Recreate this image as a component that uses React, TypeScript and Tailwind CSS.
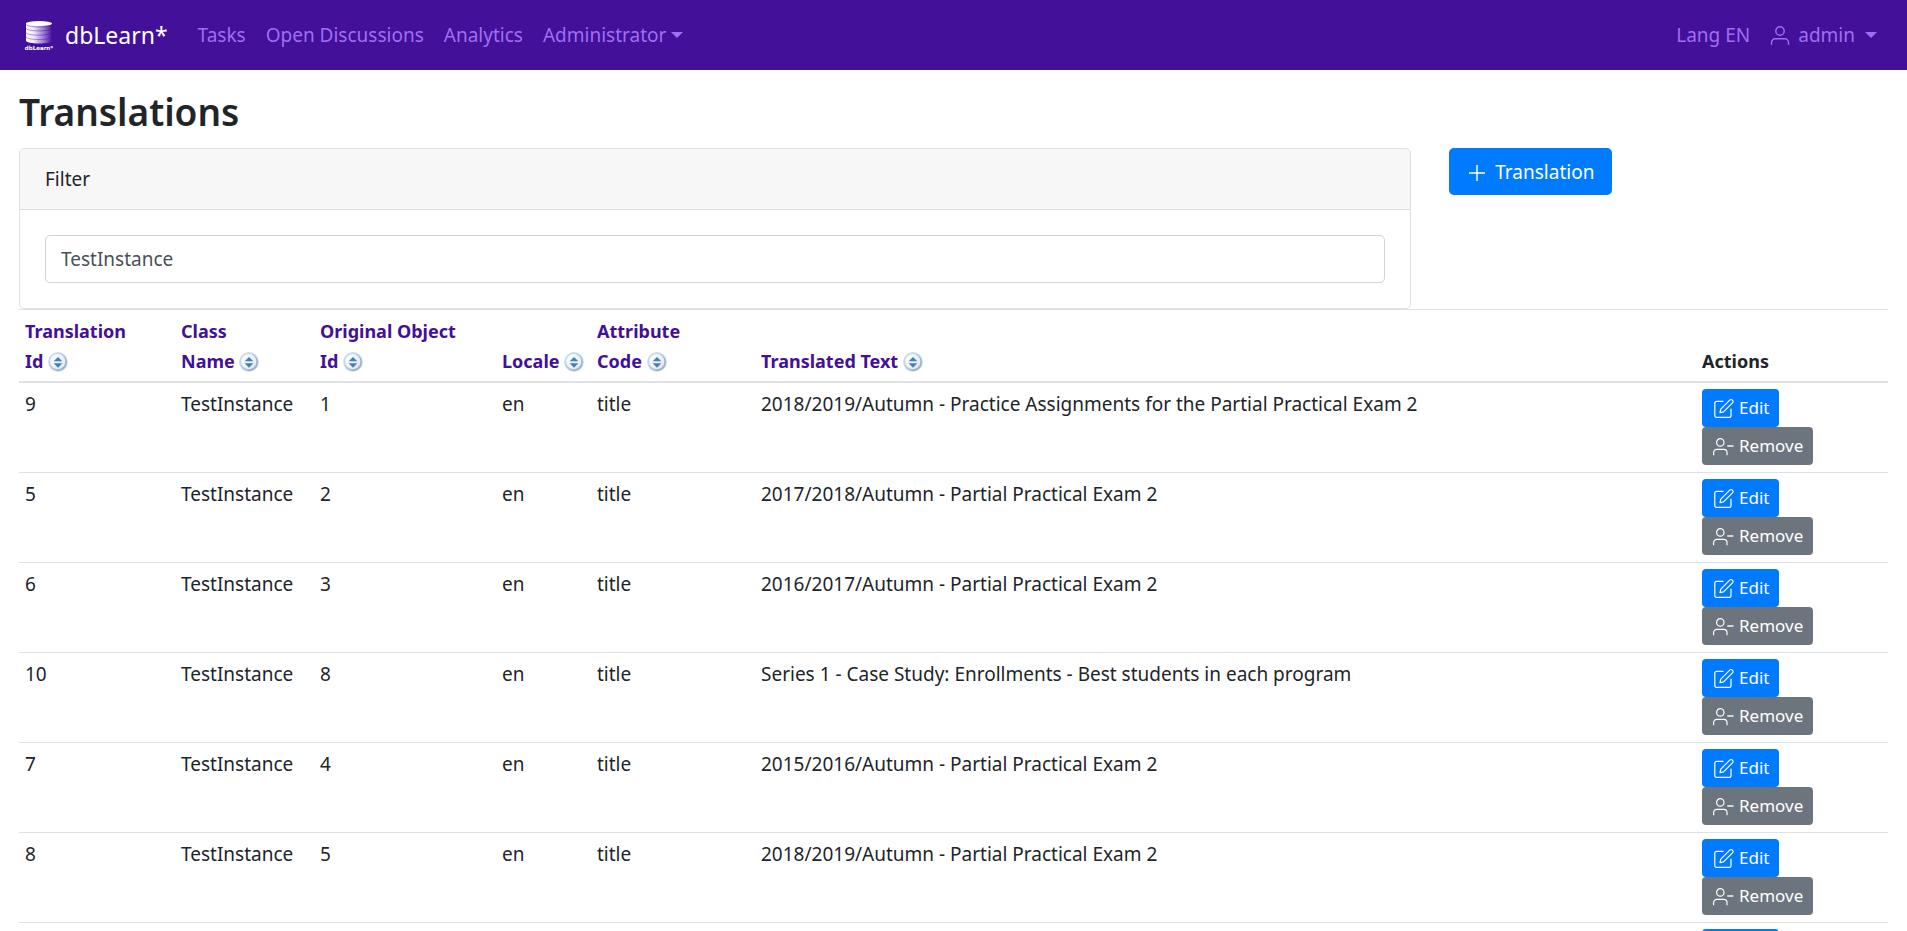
import React, { useState } from "react";

type Row = { id: number; className: string; objectId: number; locale: string; code: string; text: string };

const rows: Row[] = [
  { id: 9, className: "TestInstance", objectId: 1, locale: "en", code: "title", text: "2018/2019/Autumn - Practice Assignments for the Partial Practical Exam 2" },
  { id: 5, className: "TestInstance", objectId: 2, locale: "en", code: "title", text: "2017/2018/Autumn - Partial Practical Exam 2" },
  { id: 6, className: "TestInstance", objectId: 3, locale: "en", code: "title", text: "2016/2017/Autumn - Partial Practical Exam 2" },
  { id: 10, className: "TestInstance", objectId: 8, locale: "en", code: "title", text: "Series 1 - Case Study: Enrollments - Best students in each program" },
  { id: 7, className: "TestInstance", objectId: 4, locale: "en", code: "title", text: "2015/2016/Autumn - Partial Practical Exam 2" },
  { id: 8, className: "TestInstance", objectId: 5, locale: "en", code: "title", text: "2018/2019/Autumn - Partial Practical Exam 2" },
  { id: 11, className: "TestInstance", objectId: 6, locale: "en", code: "title", text: "2014/2015/Autumn - Partial Practical Exam 2" },
];

const columns: { lines: string[]; width: string }[] = [
  { lines: ["Translation", "Id"], width: "w-[156px]" },
  { lines: ["Class", "Name"], width: "w-[139px]" },
  { lines: ["Original Object", "Id"], width: "w-[182px]" },
  { lines: ["Locale"], width: "w-[95px]" },
  { lines: ["Attribute", "Code"], width: "w-[164px]" },
  { lines: ["Translated Text"], width: "" },
];

function Logo() {
  return (
    <svg viewBox="0 0 38 38" className="size-[38px]" aria-hidden="true">
      <defs>
        <linearGradient id="cyl" x1="0" x2="1" y1="0" y2="0">
          <stop offset="0" stopColor="#fff" />
          <stop offset="0.3" stopColor="#efe8fb" />
          <stop offset="0.75" stopColor="#8a64cc" />
          <stop offset="1" stopColor="#421099" />
        </linearGradient>
      </defs>
      <path d="M6 7v17.500c0 1.800 5.800 3 13 3s13-1.200 13-3V7z" fill="url(#cyl)" />
      <g fill="none" stroke="#421099" strokeWidth="0.7" strokeOpacity="0.6">
        <path d="M6 8c0 1.800 5.800 2.900 13 2.900s13-1.100 13-2.900" />
        <path d="M6 12c0 1.800 5.800 2.900 13 2.900s13-1.100 13-2.900" />
        <path d="M6 16.300c0 1.800 5.800 2.900 13 2.900s13-1.100 13-2.900" />
        <path d="M6 20.600c0 1.800 5.800 2.900 13 2.900s13-1.100 13-2.900" />
      </g>
      <ellipse cx="19" cy="7.500" rx="13" ry="2.600" fill="#fff" />
      <text x="19" y="34" textAnchor="middle" fill="#fff" fontSize="5.500" fontWeight="700" fontFamily="DejaVu Sans, sans-serif">dbLearn*</text>
    </svg>
  );
}

function UserIcon() {
  return (
    <svg viewBox="0 0 20 20" className="size-5" fill="none" stroke="currentColor" strokeWidth="1.400" aria-hidden="true">
      <circle cx="10" cy="6" r="4.200" />
      <path d="M1.500 20v-2.500a3.700 3.700 0 0 1 3.700-3.700h9.600a3.700 3.700 0 0 1 3.700 3.700V20" />
    </svg>
  );
}

function PlusIcon() {
  return (
    <svg viewBox="0 0 20 20" className="size-5" fill="none" stroke="currentColor" strokeWidth="1.400" aria-hidden="true">
      <path d="M10 3v16M2 11h16" />
    </svg>
  );
}

function EditIcon() {
  return (
    <svg viewBox="0 0 22 20" className="h-5 w-[22px]" fill="none" stroke="currentColor" strokeWidth="1.200" strokeLinejoin="round" strokeLinecap="round" aria-hidden="true">
      <path d="M11 3.400H4.400a1.600 1.600 0 0 0-1.600 1.600v12.800a1.600 1.600 0 0 0 1.600 1.600h13a1.600 1.600 0 0 0 1.600-1.600V11" />
      <path d="M8 14.600l.8-3.500L18 1.900a1.400 1.400 0 0 1 2 0l.7.700a1.400 1.400 0 0 1 0 2L11.500 13.800z" />
    </svg>
  );
}

function RemoveIcon() {
  return (
    <svg viewBox="0 0 22 20" className="h-5 w-[22px]" fill="none" stroke="currentColor" strokeWidth="1.200" aria-hidden="true">
      <circle cx="8.300" cy="6.400" r="3.700" />
      <path d="M1.600 19.300v-2.700a3.200 3.200 0 0 1 3.200-3.200h7a3.200 3.200 0 0 1 3.200 3.200v2.700" />
      <path d="M15.300 10h6.200" strokeWidth="1.400" />
    </svg>
  );
}

function SortIcon() {
  return (
    <svg viewBox="0 0 20 20" className="inline-block size-5 align-[-4px]" aria-hidden="true">
      <defs>
        <linearGradient id="ring" x1="0" x2="1" y1="0" y2="1">
          <stop offset="0" stopColor="#bdd6f0" />
          <stop offset="1" stopColor="#94a6bc" />
        </linearGradient>
        <linearGradient id="face" x1="0" x2="1" y1="0" y2="1">
          <stop offset="0" stopColor="#ffffff" />
          <stop offset="1" stopColor="#dfe6ee" />
        </linearGradient>
      </defs>
      <circle cx="10" cy="10" r="9.900" fill="#c8ddf4" />
      <circle cx="10.200" cy="10.200" r="8.700" fill="url(#ring)" />
      <circle cx="9.700" cy="9.700" r="7.600" fill="url(#face)" />
      <path d="M10 4.900l4.300 4.400H5.700zM10 15.700l4.300-4.400H5.700z" fill="#3f7fc6" />
    </svg>
  );
}

function Caret() {
  return (
    <svg viewBox="0 0 12 6" className="h-[6px] w-3" fill="currentColor" aria-hidden="true">
      <path d="M0 0h12L6 6z" />
    </svg>
  );
}

export default function App() {
  const [filter, setFilter] = useState("TestInstance");
  const visible = rows.filter((r) => Object.values(r).join(" ").toLowerCase().includes(filter.toLowerCase()));

  return (
    <div className="bg-white font-['Noto_Sans','Open_Sans',sans-serif] text-[19px] leading-[30px] text-[#212529]">
      <nav className="flex h-[70px] items-center bg-[#421099] px-5 text-[#9f6ff0]">
        <a href="#home" className="mr-5 flex items-center gap-[7px] text-[23px] text-white">
          <Logo />
          dbLearn*
        </a>
        <div className="flex flex-1 items-center">
          <a href="#tasks" className="px-[10px]">Tasks</a>
          <a href="#discussions" className="px-[10px]">Open Discussions</a>
          <a href="#analytics" className="px-[10px]">Analytics</a>
          <button type="button" className="flex items-center gap-[5px] px-[10px]">
            Administrator
            <Caret />
          </button>
        </div>
        <a href="#lang" className="px-[10px]">Lang EN</a>
        <button type="button" className="flex items-center gap-[10px] px-[10px]">
          <span className="flex items-center gap-2">
            <UserIcon />
            admin
          </span>
          <Caret />
        </button>
      </nav>

      <main className="px-[19px]">
        <h1 className="mt-[18px] mb-3 text-[37px] leading-[48px] font-semibold">Translations</h1>

        <div className="-mx-[19px] flex">
          <div className="w-3/4 px-[19px]">
            <section className="rounded-[5px] border border-[#dfdfdf]">
              <div className="rounded-t-[4px] border-b border-[#dfdfdf] bg-[#f7f7f7] px-[25px] py-[15px]">
                <label htmlFor="filter">Filter</label>
              </div>
              <div className="p-[25px]">
                <input
                  id="filter"
                  type="text"
                  value={filter}
                  onChange={(e) => setFilter(e.target.value)}
                  className="block h-12 w-full rounded-[5px] border border-[#ced4da] bg-white px-[15px] text-[#495057]"
                />
              </div>
            </section>
          </div>
          <div className="w-1/4 px-[19px]">
            <button type="button" className="flex h-[47px] items-center gap-2 rounded-[5px] bg-[#007bff] px-[18px] text-white">
              <PlusIcon />
              Translation
            </button>
          </div>
        </div>

        <table className="w-full table-fixed border-separate border-spacing-0">
          <thead className="text-[18px]">
            <tr>
              {columns.map((c) => (
                <th
                  key={c.lines[0]}
                  scope="col"
                  className={`${c.width} border-t border-b-2 border-[#dee2e6] px-[6px] pt-[6px] pb-[5px] text-left align-bottom font-bold whitespace-nowrap`}
                >
                  <a href="#sort" className="text-[#421099]">
                    {c.lines.map((line, i) => (
                      <React.Fragment key={line}>
                        {i > 0 && <br />}
                        {line}
                      </React.Fragment>
                    ))}{" "}
                    <SortIcon />
                  </a>
                </th>
              ))}
              <th scope="col" className="w-[192px] border-t border-b-2 border-[#dee2e6] px-[6px] pt-[6px] pb-[5px] text-left align-bottom font-bold">
                Actions
              </th>
            </tr>
          </thead>
          <tbody>
            {visible.map((r) => (
              <tr key={r.id}>
                {[r.id, r.className, r.objectId, r.locale, r.code, r.text].map((v, i) => (
                  <td key={i} className="border-b border-[#dee2e6] px-[6px] pt-[6px] align-top">
                    {v}
                  </td>
                ))}
                <td className="border-b border-[#dee2e6] px-[6px] pt-[6px] pb-[7px] align-top">
                  <div className="flex flex-col items-start text-[17px]">
                    <button type="button" className="flex h-[38px] items-center gap-[5px] rounded-[4px] bg-[#007bff] px-[10px] text-white">
                      <EditIcon />
                      Edit
                    </button>
                    <button type="button" className="flex h-[38px] items-center gap-[5px] rounded-[4px] bg-[#6c757d] px-[10px] text-white">
                      <RemoveIcon />
                      Remove
                    </button>
                  </div>
                </td>
              </tr>
            ))}
          </tbody>
        </table>
      </main>
    </div>
  );
}
